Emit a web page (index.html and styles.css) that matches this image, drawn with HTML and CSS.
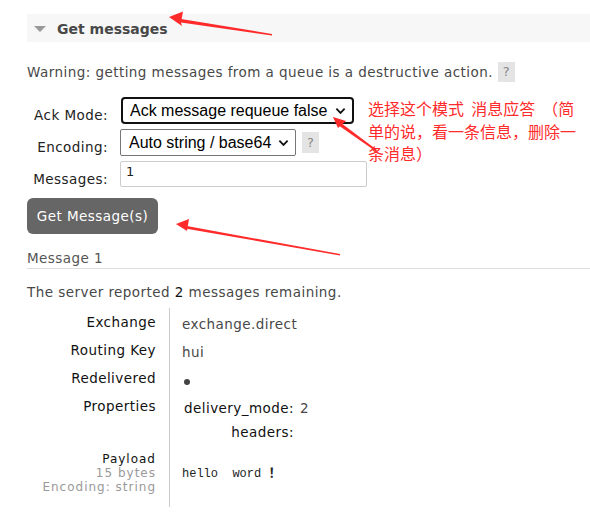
FILE: index.html
```html
<!DOCTYPE html>
<html lang="en">
<head>
<meta charset="utf-8">
<title>Get messages</title>
<link rel="stylesheet" href="styles.css">
</head>
<body>
<div class="page">
  <div class="section-head">
    <span class="tri"></span>
    <h2 class="head-title">Get messages</h2>
  </div>

  <p class="warning">Warning: getting messages from a queue is a destructive action. <span class="help">?</span></p>

  <div class="form">
    <label class="f-label">Ack Mode:</label>
    <div class="f-field">
      <div class="select select-focus"><span>Ack message requeue false</span><svg class="chev" viewBox="0 0 12 8" width="11" height="8"><path d="M1.5 1.5 L6 6 L10.5 1.5" fill="none" stroke="#111" stroke-width="2"/></svg></div>
    </div>
    <label class="f-label">Encoding:</label>
    <div class="f-field">
      <div class="select select-plain"><span>Auto string / base64</span><svg class="chev" viewBox="0 0 12 8" width="11" height="8"><path d="M1.5 1.5 L6 6 L10.5 1.5" fill="none" stroke="#111" stroke-width="2"/></svg></div>
      <span class="help help-enc">?</span>
    </div>
    <label class="f-label">Messages:</label>
    <div class="f-field">
      <div class="input">1</div>
    </div>
  </div>

  <button class="btn">Get Message(s)</button>

  <h3 class="msg-title">Message 1</h3>
  <p class="remaining">The server reported <b>2</b> messages remaining.</p>

  <table class="facts">
    <tr><th>Exchange</th><td>exchange.direct</td></tr>
    <tr><th>Routing Key</th><td>hui</td></tr>
    <tr><th>Redelivered</th><td><span class="dot"></span></td></tr>
    <tr class="props-row"><th>Properties</th><td>
      <div class="props">
        <span class="pk">delivery_mode:</span><span class="pv">2</span>
        <span class="pk">headers:</span><span class="pv"></span>
      </div>
    </td></tr>
    <tr class="payload-row"><th><div>Payload</div><div class="sub">15 bytes</div><div class="sub">Encoding: string</div></th><td><pre class="payload">hello  word <span class="bang">！</span></pre></td></tr>
  </table>
</div>

<div class="note">选择这个模式&nbsp;&nbsp;消息应答&nbsp;&nbsp;（简单的说，看一条信息，删除一条消息）</div>

<svg class="arrows" width="590" height="528" viewBox="0 0 590 528">
  <g fill="#ff2b2b" stroke="none">
    <polygon points="169,17 272,34 272,35.5 181,22.5 182,26 "/>
    <polygon points="169,17 183,11.5 181,22.5"/>
    <polygon points="333,117 377,150 376,151.5 338,125"/>
    <polygon points="333,117 346,121 338,128"/>
    <polygon points="176,224 340,254 340,255.5 188,229"/>
    <polygon points="176,224 189,219 187,231"/>
  </g>
</svg>
</body>
</html>
```

FILE: styles.css
```css
html, body {
  margin: 0;
  padding: 0;
  background: #fff;
}
body {
  font-family: "DejaVu Sans", Verdana, sans-serif;
  font-size: 13.5px;
  letter-spacing: 0.45px;
  color: #484848;
  width: 590px;
  height: 528px;
  overflow: hidden;
  position: relative;
}
.page {
  padding: 14px 0 0 27px;
}
.section-head {
  display: flex;
  align-items: center;
  height: 28px;
  background: #f7f7f7;
  padding-left: 7px;
}
.tri {
  width: 0;
  height: 0;
  border-left: 6px solid transparent;
  border-right: 6px solid transparent;
  border-top: 6px solid #999;
  margin-right: 11px;
  margin-top: 1px;
}
.head-title {
  margin: 0;
  font-size: 14px;
  letter-spacing: 0;
  font-weight: bold;
  color: #484848;
  padding-top: 1px;
}
.warning {
  margin: 20px 0 0 0;
  height: 20px;
  line-height: 20px;
  display: flex;
  align-items: center;
  white-space: pre;
}
.help {
  display: inline-block;
  background: #e4e4e4;
  color: #888;
  width: 17px;
  height: 20px;
  line-height: 20px;
  text-align: center;
  font-size: 13px;
  letter-spacing: 0;
}
.form {
  margin-top: 15px;
  display: grid;
  grid-template-columns: 81px auto;
  column-gap: 12px;
  row-gap: 5px;
  align-items: start;
}
.f-label {
  text-align: right;
  padding-top: 10px;
  color: #222;
}
.f-field {
  display: flex;
  align-items: center;
}
.select {
  display: flex;
  align-items: center;
  justify-content: space-between;
  box-sizing: border-box;
  height: 27px;
  font-family: "Liberation Sans", Arial, sans-serif;
  font-size: 16px;
  letter-spacing: 0;
  color: #000;
  background: #fff;
}
.select-focus {
  width: 233px;
  border: 2px solid #111;
  border-radius: 4px;
  padding: 0 6px 0 7px;
  margin-left: 1px;
}
.select-plain {
  width: 176px;
  border: 1px solid #767676;
  border-radius: 2px;
  padding: 0 6px 0 8px;
}
.chev { display: block; }
.help-enc {
  margin-left: 6px;
  height: 21px;
  line-height: 21px;
}
.input {
  box-sizing: border-box;
  width: 247px;
  height: 26px;
  border: 1px solid #ccc;
  border-radius: 2px;
  padding: 2px 5px;
  font-size: 13px;
  letter-spacing: 0;
  color: #222;
}
.btn {
  display: block;
  margin-top: 11px;
  width: 131px;
  height: 36px;
  background: #666;
  color: #fff;
  border: none;
  border-radius: 6px;
  font-family: "DejaVu Sans", Verdana, sans-serif;
  font-size: 13.5px;
  letter-spacing: 0.45px;
  padding: 0;
}
.msg-title {
  margin: 16px 0 0 0;
  font-size: 13.5px;
  font-weight: normal;
  color: #555;
  padding-bottom: 2px;
  border-bottom: 1px solid #ddd;
  line-height: 16px;
}
.remaining {
  margin: 15px 0 0 0;
  line-height: 16px;
}
.remaining b { font-weight: normal; color: #111; }
.facts {
  margin-top: 8px;
  border-collapse: collapse;
}
.facts > tbody > tr > th {
  width: 129px;
  text-align: right;
  font-weight: normal;
  color: #111;
  vertical-align: top;
  padding: 0 13px 12px 0;
  line-height: 16px;
}
.facts > tbody > tr > td {
  border-left: 1px solid #ccc;
  padding: 2px 0 10px 12px;
  vertical-align: top;
  line-height: 16px;
}
.facts > tbody > tr:first-child > th { padding-top: 6px; }
.facts > tbody > tr:first-child > td { padding-top: 8px; }
.dot {
  display: block;
  width: 6px;
  height: 6px;
  border-radius: 50%;
  background: #444;
  margin: 7px 0 3px 2px;
}
.props {
  display: grid;
  grid-template-columns: auto auto;
  justify-content: start;
  column-gap: 6px;
  row-gap: 8px;
  margin-left: 2px;
  line-height: 16px;
}
.pk { text-align: right; color: #111; }
.pv { color: #484848; }
.facts > tbody > tr.payload-row > th {
  padding: 2px 13px 13px 0;
}
.facts > tbody > tr.payload-row > th > div {
  height: 14px;
  line-height: 14px;
  font-size: 12px;
  letter-spacing: 1px;
}
.facts > tbody > tr.payload-row > td {
  vertical-align: middle;
  padding: 2px 0 13px 12px;
}
.sub { color: #999; }
.payload {
  margin: 0;
  font-family: "Liberation Mono", "Courier New", monospace;
  font-size: 12px;
  letter-spacing: 0;
  color: #222;
}
.bang { font-family: "Noto Sans CJK SC", sans-serif; font-weight: bold; font-size: 13px; }
.note {
  position: absolute;
  left: 368px;
  top: 97px;
  width: 212px;
  font-family: "Noto Sans CJK SC", sans-serif;
  font-size: 16px;
  letter-spacing: 0;
  line-height: 22.5px;
  color: #ff2b2b;
}
.arrows {
  position: absolute;
  left: 0;
  top: 0;
  pointer-events: none;
}
```
